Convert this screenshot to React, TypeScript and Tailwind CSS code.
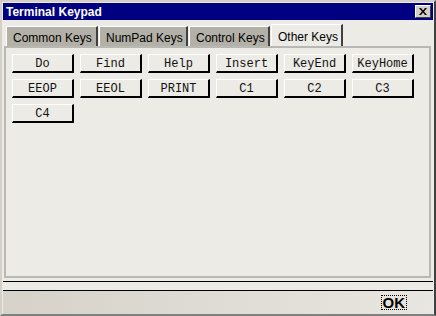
import { useState } from "react";

const tabs = ["Common Keys", "NumPad Keys", "Control Keys", "Other Keys"];
const tabWidths = ["w-[92px]", "w-[89px]", "w-[81px]", "w-[72px]"];

const keys = ["Do", "Find", "Help", "Insert", "KeyEnd", "KeyHome", "EEOP", "EEOL", "PRINT", "C1", "C2", "C3", "C4"];

export default function App() {
  const [active, setActive] = useState(3);

  return (
    <div className="flex h-[316px] w-[436px] flex-col border-2 border-t-[#d4d0c8] border-l-[#d4d0c8] border-r-[#404040] border-b-[#808080] bg-[#ecebe6] px-px pt-px font-['Liberation_Sans',sans-serif]">
      <div className="flex h-[17px] items-center justify-between bg-[#000080] pl-[3px] pr-[2px]">
        <span className="text-[12px] font-bold leading-none text-white">Terminal Keypad</span>
        <button className="grid h-[13px] w-[16px] place-items-center border border-t-white border-l-white border-r-[#404040] border-b-[#404040] bg-[#d4d0c8]">
          <svg width="8" height="7" viewBox="0 0 8 7">
            <path d="M0 0h2l2 2.5L6 0h2L5 3.5 8 7H6L4 4.5 2 7H0l3-3.5z" fill="#000" />
          </svg>
        </button>
      </div>

      <div className="mt-[4px] flex h-[22px] items-end pl-[3px]">
        {tabs.map((tab, i) => (
          <button
            key={tab}
            onClick={() => setActive(i)}
            className={`${tabWidths[i]} mr-px flex items-center whitespace-nowrap border-l border-t border-r-2 border-l-white border-t-white border-r-[#404040] pl-[6px] pt-[2px] text-[12px] leading-none text-black ${
              i === active ? "h-[22px] bg-[#ecebe6]" : "h-[20px] bg-[#b2b0a7]"
            }`}
          >
            {tab}
          </button>
        ))}
      </div>

      <div className="ml-px mr-[2px] h-[232px] border-2 border-[#b8b8b4] pl-[6px] pt-[6px]">
        <div className="grid grid-cols-[repeat(6,62px)] gap-x-[6px] gap-y-[6px]">
          {keys.map((k) => (
            <button
              key={k}
              className="h-[19px] border border-t-white border-l-white border-r-2 border-b-2 border-r-black border-b-black bg-[#ecebe6] pt-px font-['Liberation_Mono',monospace] text-[12px] font-normal leading-none text-[#111]"
            >
              {k}
            </button>
          ))}
        </div>
      </div>

      <div className="mt-[3px] h-[10px] border-t border-b border-black" />
      <div className="flex flex-1 items-center justify-end bg-gradient-to-r from-[#d6d2ca] to-[#e8e6e0] pr-[26px]">
        <span className="border border-dotted border-black px-px text-[15px] font-bold leading-[13px] text-black">OK</span>
      </div>
    </div>
  );
}
